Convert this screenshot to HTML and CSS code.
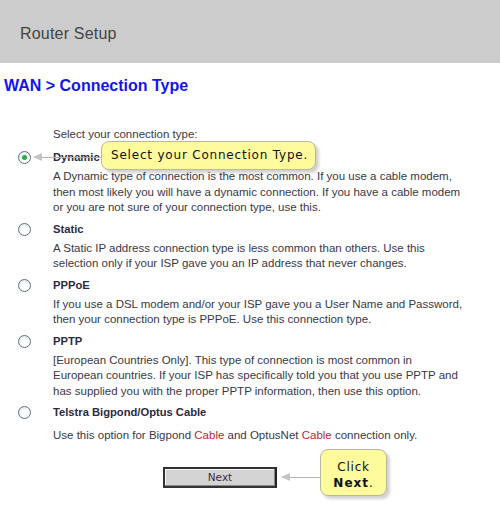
FILE: index.html
```html
<!DOCTYPE html>
<html lang="en">
<head>
  <meta charset="UTF-8" />
  <title>Router Setup</title>
  <link rel="stylesheet" href="styles.css">
</head>
<body>
  <div class="header">Router Setup</div>

  <h1 class="page-title">WAN &gt; Connection Type</h1>

  <div class="content">
    <div class="intro">Select your connection type:</div>

    <div class="option">
      <div class="option-row">
        <span class="radio checked"></span>
        <span class="option-label">Dynamic</span>
        <div class="callout-arrow select-arrow"></div>
        <div class="callout select-callout">Select your Connection Type.</div>
      </div>
      <p class="option-desc">A Dynamic type of connection is the most common. If you use a cable modem,<br>
        then most likely you will have a dynamic connection. If you have a cable modem<br>
        or you are not sure of your connection type, use this.</p>
    </div>

    <div class="option">
      <div class="option-row">
        <span class="radio"></span>
        <span class="option-label">Static</span>
      </div>
      <p class="option-desc">A Static IP address connection type is less common than others. Use this<br>
        selection only if your ISP gave you an IP address that never changes.</p>
    </div>

    <div class="option">
      <div class="option-row">
        <span class="radio"></span>
        <span class="option-label">PPPoE</span>
      </div>
      <p class="option-desc">If you use a DSL modem and/or your ISP gave you a User Name and Password,<br>
        then your connection type is PPPoE. Use this connection type.</p>
    </div>

    <div class="option">
      <div class="option-row">
        <span class="radio"></span>
        <span class="option-label">PPTP</span>
      </div>
      <p class="option-desc">[European Countries Only]. This type of connection is most common in<br>
        European countries. If your ISP has specifically told you that you use PPTP and<br>
        has supplied you with the proper PPTP information, then use this option.</p>
    </div>

    <div class="option">
      <div class="option-row">
        <span class="radio"></span>
        <span class="option-label">Telstra Bigpond/Optus Cable</span>
      </div>
      <p class="option-desc last">Use this option for Bigpond <span class="red">Cable</span> and OptusNet <span class="red">Cable</span> connection only.</p>
    </div>

    <div class="actions">
      <button class="next-btn">Next</button>
      <div class="callout-arrow next-arrow"></div>
      <div class="callout next-callout">Click<br><b>Next</b>.</div>
    </div>
  </div>
</body>
</html>
```

FILE: styles.css
```css
body {
  margin: 0;
  background: #fff;
  font-family: "Liberation Sans", Arial, sans-serif;
  font-size: 11.5px;
  color: #3a3848;
}

.header {
  height: 63px;
  box-sizing: border-box;
  padding: 25px 0 0 20px;
  background: #cccccc;
  font-size: 16px;
  color: #444;
  letter-spacing: 0.2px;
}

.page-title {
  margin: 14px 0 0 4px;
  font-size: 16px;
  font-weight: bold;
  color: #1414f0;
  line-height: 18px;
}

.content {
  padding: 32px 0 0 53px;
}

.intro {
  line-height: 15px;
}

.option {
  margin-top: 6px;
}

.intro + .option {
  margin-top: 8px;
}

.option-row {
  position: relative;
  height: 15px;
  line-height: 15px;
  display: flex;
  align-items: center;
}

.option-label {
  font-weight: bold;
  font-size: 11.2px;
  color: #2c2a44;
}

.radio {
  position: absolute;
  left: -35px;
  top: 1px;
  width: 11px;
  height: 11px;
  border: 1px solid #5f6f80;
  border-radius: 50%;
  background: radial-gradient(circle at 60% 65%, #fff 30%, #dde3ea 100%);
}

.radio.checked::after {
  content: "";
  position: absolute;
  left: 3px;
  top: 3px;
  width: 5px;
  height: 5px;
  border-radius: 50%;
  background: #2ea84a;
}

.option-desc {
  margin: 4px 0 0;
  line-height: 15.5px;
}

.option-desc.last {
  margin-top: 8px;
}

.red {
  color: #c0262d;
}

/* callouts */
.callout {
  position: absolute;
  background: #fdfb9c;
  border: 1px solid #b8b8a0;
  border-radius: 8px;
  box-shadow: 3px 3px 3px rgba(0, 0, 0, 0.18);
  font-family: "DejaVu Sans", Verdana, sans-serif;
  font-size: 12px;
  color: #111;
  letter-spacing: 0.8px;
}

.callout-arrow {
  position: absolute;
  height: 1px;
  background: #b4b4b4;
}

.callout-arrow::before {
  content: "";
  position: absolute;
  left: -1px;
  top: -4px;
  border-top: 4.5px solid transparent;
  border-bottom: 4.5px solid transparent;
  border-right: 9px solid #c4c4c4;
}

.select-arrow {
  left: -19px;
  top: 7px;
  width: 68px;
}

.select-callout {
  left: 48px;
  top: -9px;
  width: 215px;
  height: 29px;
  box-sizing: border-box;
  line-height: 27px;
  padding-left: 9px;
}

.actions {
  position: relative;
  margin-top: 23px;
  padding-left: 110px;
  height: 40px;
}

.next-btn {
  display: block;
  width: 114px;
  height: 21px;
  padding: 0;
  border: 2px solid #333;
  border-right-color: #222;
  background: #d4d4d4;
  box-shadow: inset -1px -1px 0 #888, inset 1px 1px 0 #f4f4f4;
  font-family: "DejaVu Sans", Verdana, sans-serif;
  font-size: 10.5px;
  color: #3a2c48;
}

.next-arrow {
  left: 229px;
  top: 10px;
  width: 38px;
}

.next-callout {
  left: 267px;
  top: -18px;
  width: 67px;
  height: 47px;
  box-sizing: border-box;
  padding-top: 9px;
  text-align: center;
  line-height: 16px;
}

.next-callout b {
  letter-spacing: 1px;
}
```
